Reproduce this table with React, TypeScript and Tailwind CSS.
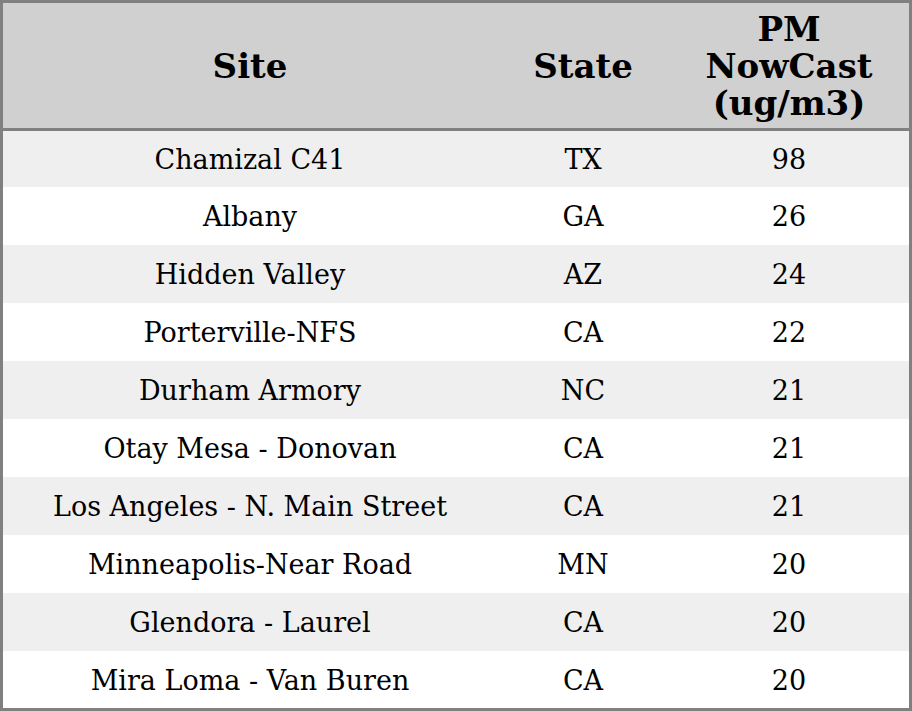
import React from 'react';

interface Reading {
    site: string;
    state: string;
    value: number;
}

const readings: Reading[] = [
    { site: 'Chamizal C41', state: 'TX', value: 98 },
    { site: 'Albany', state: 'GA', value: 26 },
    { site: 'Hidden Valley', state: 'AZ', value: 24 },
    { site: 'Porterville-NFS', state: 'CA', value: 22 },
    { site: 'Durham Armory', state: 'NC', value: 21 },
    { site: 'Otay Mesa - Donovan', state: 'CA', value: 21 },
    { site: 'Los Angeles - N. Main Street', state: 'CA', value: 21 },
    { site: 'Minneapolis-Near Road', state: 'MN', value: 20 },
    { site: 'Glendora - Laurel', state: 'CA', value: 20 },
    { site: 'Mira Loma - Van Buren', state: 'CA', value: 20 },
];

const App: React.FC = () => {
    const rowHeight = (i: number) => {
        if (i === 0) return 'h-[56px]';
        if (i === readings.length - 1) return 'h-[57px]';
        return 'h-[58px]';
    };

    return (
        <div className="w-[912px] h-[711px] border-[3px] border-[#808080] bg-white font-['DejaVu_Serif',serif] text-black">
            <table className="w-full table-fixed border-collapse">
                <colgroup>
                    <col className="w-[494px]" />
                    <col className="w-[172px]" />
                    <col className="w-[240px]" />
                </colgroup>
                <thead>
                    <tr className="h-[125px] bg-[#d0d0d0] text-[34px] font-bold leading-[37px]">
                        <th className="p-0 pt-[2px] text-center align-middle">Site</th>
                        <th className="p-0 pt-[2px] text-center align-middle">State</th>
                        <th className="p-0 pt-[2px] text-center align-middle">
                            PM
                            <br />
                            NowCast
                            <br />
                            (ug/m3)
                        </th>
                    </tr>
                    <tr className="h-[3px] bg-[#808080]">
                        <th colSpan={3} className="p-0"></th>
                    </tr>
                </thead>
                <tbody className="text-[27px] leading-[30px]">
                    {readings.map((r, i) => (
                        <tr
                            key={r.site}
                            className={`${rowHeight(i)} ${i % 2 === 0 ? 'bg-[#efefef]' : 'bg-white'}`}
                        >
                            <td className="p-0 pt-[2px] text-center align-middle">{r.site}</td>
                            <td className="p-0 pt-[2px] text-center align-middle">{r.state}</td>
                            <td className="p-0 pt-[2px] text-center align-middle">{r.value}</td>
                        </tr>
                    ))}
                </tbody>
            </table>
        </div>
    );
};

export default App;
